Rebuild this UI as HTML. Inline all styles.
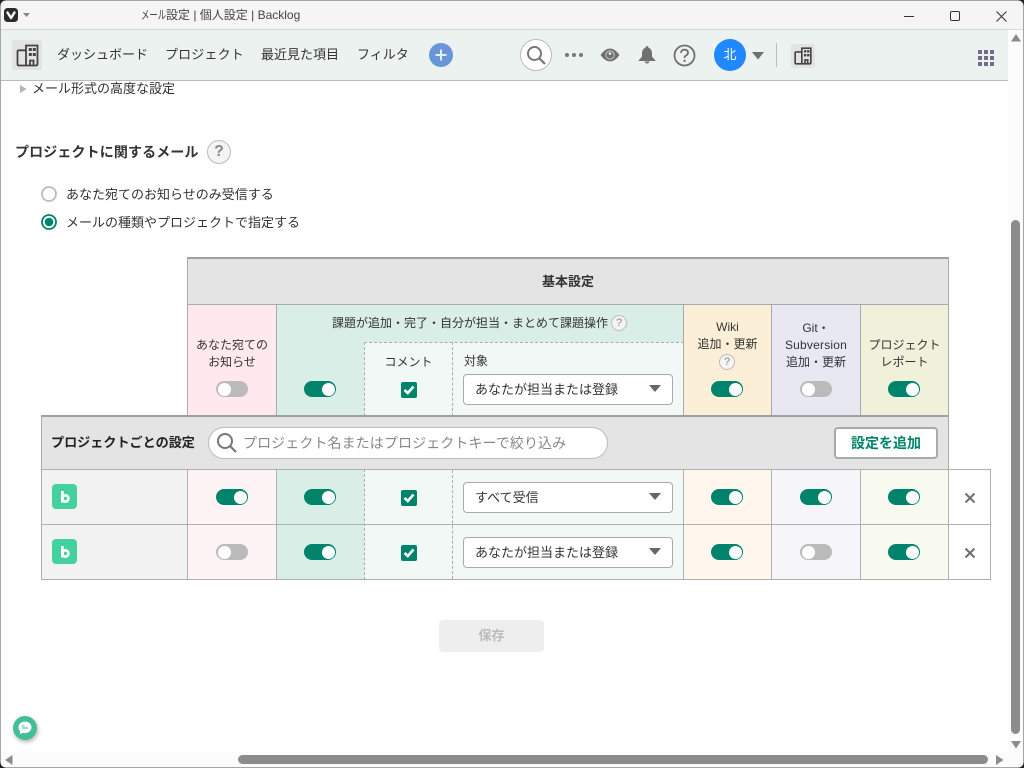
<!DOCTYPE html>
<html lang="ja"><head><meta charset="utf-8"><title>メール設定 | 個人設定 | Backlog</title>
<style>
html,body{margin:0;padding:0;width:1024px;height:768px;overflow:hidden;background:#fff}
body{position:relative;font-family:"Liberation Sans","Noto Sans CJK JP",sans-serif;font-size:13px;color:#333}
.a,.t,.tg,.cb,.sel,.c,svg{position:absolute}
.t{white-space:nowrap;line-height:18px}
.cn{text-align:center}
.l17{line-height:17px}
.c{box-sizing:border-box}
.tg{width:32px;height:16px;border-radius:8px;background:#00836b}
.tg:after{content:"";position:absolute;top:1.500px;right:1.500px;width:13px;height:13px;border-radius:50%;background:#fff}
.tg.off{background:#bbb}
.tg.off:after{right:auto;left:1.500px}
.cb{width:16px;height:16px;border-radius:2px;background:#00836b}
.sel{left:463px;width:210px;height:31px;box-sizing:border-box;background:#fff;border:1px solid #aaa;border-radius:4px;line-height:29px;padding-left:11px}
.sel:after{content:"";position:absolute;right:11px;top:10px;border-left:6px solid transparent;border-right:6px solid transparent;border-top:7px solid #666}
.q{position:absolute;box-sizing:border-box;border-radius:50%;border:1px solid #bbb;background:#f4f4f4;color:#888;text-align:center}
</style></head><body>

<!-- title bar -->
<div class="a" style="left:0;top:0;width:1024px;height:30px;background:#f5f5f5;border-bottom:1px solid #d5dad8;box-sizing:border-box"></div>
<svg style="left:4px;top:8px" width="14" height="14" viewBox="0 0 14 14"><rect width="14" height="14" rx="3.500" fill="#2b2b2f"/><path d="M3.500 4.500 L7 10 L10.500 4.500" fill="none" stroke="#fff" stroke-width="2.400" stroke-linejoin="round" stroke-linecap="round"/></svg>
<svg style="left:23px;top:13px" width="7" height="4"><path d="M0 0H7L3.500 4Z" fill="#888"/></svg>
<div class="t" style="left:141px;top:6px;font-size:12px;color:#444"><span style="display:inline-block;width:25px;transform:scaleX(.7);transform-origin:0 50%">メール</span>設定 | 個人設定 | Backlog</div>
<svg style="left:900px;top:8px" width="110" height="16" viewBox="0 0 110 16" fill="none" stroke="#333" stroke-width="1"><path d="M4 8.500H14"/><rect x="50.500" y="3.500" width="9" height="9" rx="1.500"/><path d="M96.500 3.500L106.500 13.500M106.500 3.500L96.500 13.500"/></svg>

<!-- nav -->
<div class="a" style="left:0;top:30px;width:1008px;height:51px;background:#ecf2ef;border-bottom:1px solid #bbb;box-sizing:border-box"></div>
<div class="a" style="left:12px;top:40px;width:30px;height:30px;border-radius:2px;background:#e3e3e3"></div>
<svg style="left:16px;top:44px" width="23" height="23" viewBox="0 0 23 23" fill="none" stroke="#444" stroke-width="1.800"><path d="M10 21.500H2.800Q1.500 21.500 1.500 20V7.500Q1.500 6.300 2.800 6.300H10"/><path d="M10 21.500V1.500H21.500V20Q21.500 21.500 20 21.500H10"/><path d="M14 21.500V16.500H17.500V21.500"/><path d="M12.800 5.500h3M16.800 5.500h3M12.800 10.500h3M16.800 10.500h3" stroke-width="3"/></svg>
<div class="t" style="left:57px;top:46px;font-size:13px">ダッシュボード</div>
<div class="t" style="left:165px;top:46px;font-size:13px;letter-spacing:.15px">プロジェクト</div>
<div class="t" style="left:261px;top:46px;font-size:13px">最近見た項目</div>
<div class="t" style="left:357px;top:46px;font-size:13px">フィルタ</div>
<svg style="left:429px;top:43px" width="24" height="24"><circle cx="12" cy="12" r="12" fill="#6a96d8"/><path d="M12 6.500V17.500M6.500 12H17.500" stroke="#e8eef9" stroke-width="2"/></svg>

<svg style="left:520px;top:39px" width="32" height="32" fill="none"><circle cx="16" cy="16" r="15.500" fill="#fff" stroke="#bbb"/><circle cx="14.500" cy="14.500" r="6.500" stroke="#777" stroke-width="2"/><path d="M19.500 19.500L25 25" stroke="#777" stroke-width="2.200"/></svg>
<svg style="left:564px;top:52px" width="20" height="6" fill="#777"><circle cx="3" cy="3" r="2"/><circle cx="10" cy="3" r="2"/><circle cx="17" cy="3" r="2"/></svg>
<svg style="left:600px;top:47px" width="20" height="16"><path d="M0.500 8Q5 1.500 10 1.500T19.500 8Q15 14.500 10 14.500T0.500 8Z" fill="#707070"/><circle cx="10" cy="8" r="4.500" fill="#ecf2ef"/><circle cx="10" cy="8" r="3.800" fill="#707070"/><circle cx="10" cy="6.500" r="1.300" fill="#ecf2ef"/></svg>
<svg style="left:638px;top:46px" width="18" height="18" viewBox="0 0 18 18" fill="#707070"><path d="M9 0Q10.300 0 10.300 1.500Q14 2.800 14 7.500V10.500L17.800 15H0.200L4 10.500V7.500Q4 2.800 7.700 1.500Q7.700 0 9 0Z"/><path d="M6.500 15.500H11.500Q11 17.500 9 17.500T6.500 15.500Z"/></svg>
<svg style="left:673px;top:44px" width="23" height="23" fill="none"><circle cx="11.500" cy="11.500" r="10" stroke="#707070" stroke-width="1.800"/><path d="M8 9Q8 5.700 11.500 5.700T15 8.800Q15 10.500 13 11.500Q11.500 12.300 11.500 14" stroke="#707070" stroke-width="1.800"/><circle cx="11.500" cy="16.800" r="1.200" fill="#707070"/></svg>
<div class="a" style="left:714px;top:39px;width:32px;height:32px;border-radius:50%;background:#2188ff;color:#fff;text-align:center;line-height:32px;font-size:13px">北</div>
<svg style="left:752px;top:52px" width="12" height="8"><path d="M0 0H12L6 7.500Z" fill="#707070"/></svg>
<div class="a" style="left:776px;top:43px;width:1px;height:24px;background:#bbb"></div>
<div class="a" style="left:791px;top:44px;width:24px;height:24px;border-radius:2px;background:#e3e3e3"></div>
<svg style="left:794px;top:47px" width="18" height="18" viewBox="0 0 23 23" fill="none" stroke="#444" stroke-width="2.100"><path d="M10 21.500H2.800Q1.500 21.500 1.500 20V7.500Q1.500 6.300 2.800 6.300H10"/><path d="M10 21.500V1.500H21.500V20Q21.500 21.500 20 21.500H10"/><path d="M14 21.500V16.500H17.500V21.500"/><path d="M12.800 5.500h3M16.800 5.500h3M12.800 10.500h3M16.800 10.500h3" stroke-width="3"/></svg>
<svg style="left:978px;top:50px" width="16" height="16" fill="#6f6f85"><rect width="4" height="4"/><rect x="6" width="4" height="4"/><rect x="12" width="4" height="4"/><rect y="6" width="4" height="4"/><rect x="6" y="6" width="4" height="4"/><rect x="12" y="6" width="4" height="4"/><rect y="12" width="4" height="4"/><rect x="6" y="12" width="4" height="4"/><rect x="12" y="12" width="4" height="4"/></svg>

<!-- top content -->
<svg style="left:20px;top:85px" width="7" height="8"><path d="M0 0L6.500 4L0 8Z" fill="#b4b4b4"/></svg>
<div class="t" style="left:32px;top:80px">メール形式の高度な設定</div>
<div class="t" style="left:15px;top:143px;font-size:14px;font-weight:bold;letter-spacing:.13px">プロジェクトに関するメール</div>
<div class="q" style="left:207px;top:140px;width:24px;height:24px;line-height:22px;font-size:16px;font-weight:bold">?</div>
<svg style="left:41px;top:186px" width="16" height="16" fill="none"><circle cx="8" cy="8" r="7" stroke="#bbb" stroke-width="1.800"/></svg>
<div class="t" style="left:66px;top:186px">あなた宛てのお知らせのみ受信する</div>
<svg style="left:41px;top:214px" width="16" height="16" fill="none"><circle cx="8" cy="8" r="7" stroke="#00836b" stroke-width="1.800"/><circle cx="8" cy="8" r="4.300" fill="#00836b"/></svg>
<div class="t" style="left:66px;top:214px">メールの種類やプロジェクトで指定する</div>

<!-- table: header -->
<div class="c" style="left:187px;top:257px;width:762px;height:48px;background:#e4e4e4;border:1px solid #aaa;border-top:2px solid #a0a0a0;text-align:center;line-height:46px;font-weight:bold">基本設定</div>
<div class="c" style="left:187px;top:304px;width:90px;height:112px;background:#ffe8ee;border:1px solid #aaa;border-width:1px 0 0 1px"></div>
<div class="c" style="left:276px;top:304px;width:408px;height:112px;background:#d9eee7;border-top:1px solid #aaa;border-left:1px solid #aaa"></div>
<div class="c" style="left:364px;top:342px;width:320px;height:74px;background:#f2f8f6;border-top:1px dashed #aaa;border-left:1px dashed #aaa"></div>
<div class="a" style="left:452px;top:342px;width:0;height:74px;border-left:1px dashed #aaa"></div>
<div class="c" style="left:683px;top:304px;width:89px;height:112px;background:#fcefd7;border:1px solid #aaa;border-width:1px 0 0 1px"></div>
<div class="c" style="left:771px;top:304px;width:90px;height:112px;background:#e8e8f2;border:1px solid #aaa;border-width:1px 0 0 1px"></div>
<div class="c" style="left:860px;top:304px;width:89px;height:112px;background:#eff1da;border:1px solid #aaa;border-width:1px 1px 0 1px"></div>

<div class="t cn l17" style="left:188px;top:337px;width:88px;white-space:normal;font-size:12px">あなた宛ての<br>お知らせ</div>
<div class="tg off" style="left:216px;top:381px"></div>
<div class="t" style="left:332px;top:314px;font-size:12px">課題が追加・完了・自分が担当・まとめて課題操作</div>
<div class="q" style="left:611px;top:315px;width:16px;height:16px;line-height:14px;font-size:11px">?</div>
<div class="tg" style="left:304px;top:381px"></div>
<div class="t cn" style="left:365px;top:353px;width:87px;font-size:12px">コメント</div>
<div class="cb" style="left:401px;top:382px"><svg style="left:2px;top:3px" width="12" height="10"><path d="M1.500 5L4.800 8L10.500 1.500" fill="none" stroke="#fff" stroke-width="2.600"/></svg></div>
<div class="t" style="left:464px;top:352px;font-size:12px">対象</div>
<div class="sel" style="top:374px">あなたが担当または登録</div>

<div class="t cn l17" style="left:684px;top:319px;width:87px;font-size:12px;color:#333">Wiki<br>追加・更新</div>
<div class="q" style="left:719px;top:354px;width:16px;height:16px;line-height:14px;font-size:11px">?</div>
<div class="tg" style="left:711px;top:381px"></div>
<div class="t cn l17" style="left:772px;top:320px;width:88px;font-size:12px">Git・<br><span style="letter-spacing:.2px">Subversion</span><br>追加・更新</div>
<div class="tg off" style="left:800px;top:381px"></div>
<div class="t cn l17" style="left:861px;top:337px;width:87px;font-size:12px">プロジェクト<br>レポート</div>
<div class="tg" style="left:888px;top:381px"></div>

<!-- project header -->
<div class="c" style="left:41px;top:415px;width:908px;height:55px;background:#e4e4e4;border:1px solid #aaa;border-top:2px solid #a0a0a0"></div>
<div class="t" style="left:51px;top:434px;font-weight:bold;font-size:13.100px;color:#222">プロジェクトごとの設定</div>
<div class="c" style="left:208px;top:427px;width:400px;height:32px;background:#fff;border:1px solid #bbb;border-radius:16px"></div>
<svg style="left:216px;top:432px" width="21" height="22" fill="none"><circle cx="9" cy="9" r="7" stroke="#777" stroke-width="2"/><path d="M14 14L20 20" stroke="#777" stroke-width="2.200"/></svg>
<div class="t" style="left:243px;top:434px;font-size:14px;letter-spacing:.09px;color:#888">プロジェクト名またはプロジェクトキーで絞り込み</div>
<div class="c" style="left:834px;top:427px;width:104px;height:32px;background:#fff;border:2px solid #aaa;border-radius:4px;text-align:center;line-height:28px;font-weight:bold;font-size:14px;color:#00836b">設定を追加</div>

<!-- rows -->
<div class="c" style="left:41px;top:469px;width:147px;height:111px;background:#f2f2f2;border:1px solid #b0b0b0"></div>
<div class="c" style="left:187px;top:469px;width:90px;height:111px;background:#fff4f5;border:1px solid #b0b0b0;border-right:0"></div>
<div class="c" style="left:276px;top:469px;width:89px;height:111px;background:#d9eee7;border:1px solid #b0b0b0;border-right:0"></div>
<div class="c" style="left:364px;top:469px;width:320px;height:111px;background:#f2f8f6;border:1px solid #b0b0b0;border-left:1px dashed #aaa;border-right:0"></div>
<div class="a" style="left:452px;top:470px;height:109px;border-left:1px dashed #aaa"></div>
<div class="c" style="left:683px;top:469px;width:89px;height:111px;background:#fff7ed;border:1px solid #b0b0b0;border-right:0"></div>
<div class="c" style="left:771px;top:469px;width:90px;height:111px;background:#f5f5fa;border:1px solid #b0b0b0;border-right:0"></div>
<div class="c" style="left:860px;top:469px;width:89px;height:111px;background:#f8faf0;border:1px solid #b0b0b0;border-right:0"></div>
<div class="c" style="left:948px;top:469px;width:43px;height:111px;background:#fff;border:1px solid #b0b0b0"></div>
<div class="a" style="left:41px;top:524px;width:950px;height:1px;background:#b0b0b0"></div>

<svg style="left:52px;top:484px" width="25" height="25" fill="none" stroke="#fff"><rect width="25" height="25" rx="4" fill="#43d19e" stroke="none"/><path d="M10.400 7V18.500" stroke-width="2.800"/><circle cx="13.300" cy="14.500" r="3.100" stroke-width="2.800"/></svg>
<svg style="left:52px;top:539px" width="25" height="25" fill="none" stroke="#fff"><rect width="25" height="25" rx="4" fill="#43d19e" stroke="none"/><path d="M10.400 7V18.500" stroke-width="2.800"/><circle cx="13.300" cy="14.500" r="3.100" stroke-width="2.800"/></svg>

<div class="tg" style="left:216px;top:489px"></div>
<div class="tg" style="left:304px;top:489px"></div>
<div class="cb" style="left:401px;top:490px"><svg style="left:2px;top:3px" width="12" height="10"><path d="M1.500 5L4.800 8L10.500 1.500" fill="none" stroke="#fff" stroke-width="2.600"/></svg></div>
<div class="sel" style="top:482px">すべて受信</div>
<div class="tg" style="left:711px;top:489px"></div>
<div class="tg" style="left:800px;top:489px"></div>
<div class="tg" style="left:888px;top:489px"></div>
<svg style="left:964px;top:492px" width="12" height="12"><path d="M1.500 1.500L10.500 10.500M10.500 1.500L1.500 10.500" stroke="#707070" stroke-width="2"/></svg>

<div class="tg off" style="left:216px;top:544px"></div>
<div class="tg" style="left:304px;top:544px"></div>
<div class="cb" style="left:401px;top:545px"><svg style="left:2px;top:3px" width="12" height="10"><path d="M1.500 5L4.800 8L10.500 1.500" fill="none" stroke="#fff" stroke-width="2.600"/></svg></div>
<div class="sel" style="top:537px">あなたが担当または登録</div>
<div class="tg" style="left:711px;top:544px"></div>
<div class="tg off" style="left:800px;top:544px"></div>
<div class="tg" style="left:888px;top:544px"></div>
<svg style="left:964px;top:547px" width="12" height="12"><path d="M1.500 1.500L10.500 10.500M10.500 1.500L1.500 10.500" stroke="#707070" stroke-width="2"/></svg>

<!-- save -->
<div class="a" style="left:439px;top:620px;width:105px;height:32px;background:#eee;border-radius:4px;text-align:center;line-height:32px;font-weight:bold;color:#bbb">保存</div>

<!-- chat -->
<div class="a" style="left:13px;top:716px;width:24px;height:24px;border-radius:50%;background:#43bf98;box-shadow:1px 2px 4px rgba(0,0,0,.3)"></div>
<svg style="left:18px;top:721px" width="14" height="15"><path d="M7 0.500C3.500 0.500 0.500 3 0.500 6.300C0.500 8 1.200 9.300 2.300 10.300L1.800 13L5 11.800C5.600 12 6.300 12.100 7 12.100C10.500 12.100 13.500 9.600 13.500 6.300S10.500 0.500 7 0.500Z" fill="#fff"/><path d="M4 5H6.500M4 7H10" stroke="#43bf98" stroke-width="1"/></svg>

<!-- scrollbars -->
<div class="a" style="left:1008px;top:30px;width:15px;height:722px;background:#fcfcfc"></div>
<div class="a" style="left:1px;top:752px;width:1022px;height:15px;background:#fcfcfc"></div>
<svg style="left:1011px;top:34px" width="10" height="8"><path d="M5 0L10 7.500H0Z" fill="#8c8c8c"/></svg>
<div class="a" style="left:1011px;top:220px;width:9px;height:514px;border-radius:5px;background:#8c8c8c"></div>
<svg style="left:1011px;top:741px" width="10" height="8"><path d="M5 7.500L10 0H0Z" fill="#8c8c8c"/></svg>
<svg style="left:5px;top:755px" width="8" height="10"><path d="M0 5L7.500 0V10Z" fill="#8c8c8c"/></svg>
<div class="a" style="left:238px;top:755px;width:750px;height:9px;border-radius:5px;background:#8c8c8c"></div>
<svg style="left:996px;top:755px" width="8" height="10"><path d="M7.500 5L0 0V10Z" fill="#8c8c8c"/></svg>

<!-- window frame -->
<div class="a" style="left:0;top:0;width:1024px;height:1px;background:#a5a5a5"></div>
<div class="a" style="left:0;top:0;width:1px;height:768px;background:#a5a5a5"></div>
<div class="a" style="left:1023px;top:0;width:1px;height:768px;background:#a5a5a5"></div>
<div class="a" style="left:0;top:767px;width:1024px;height:1px;background:#a5a5a5"></div>
<svg style="left:0;top:0" width="1024" height="768"><path d="M0 0H6Q1 1 0 6Z M1024 0H1018Q1023 1 1024 6Z M0 768H6Q1 767 0 762Z M1024 768H1018Q1023 767 1024 762Z" fill="#222"/></svg>
</body></html>
